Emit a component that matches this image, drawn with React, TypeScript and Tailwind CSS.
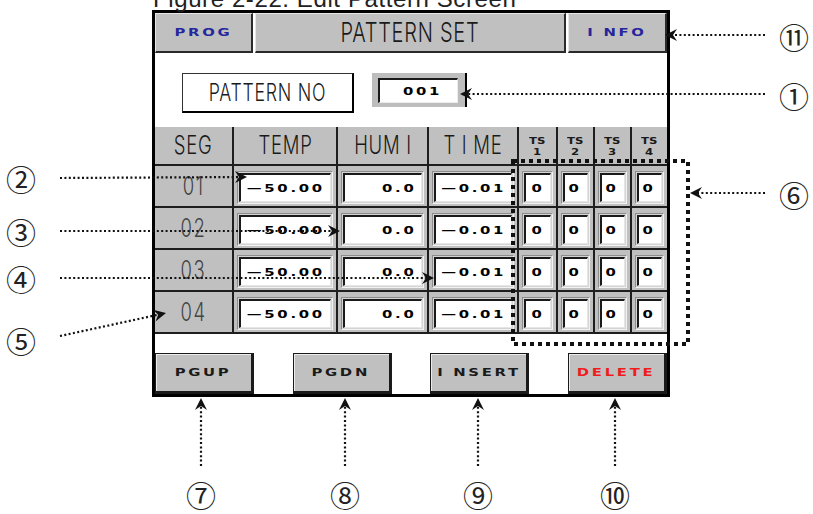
import React from "react";

const LABEL = "font-['Inter','Liberation_Sans',sans-serif] font-light";
const PIX = "inline-block font-['DejaVu_Sans',sans-serif] font-bold text-[11px] tracking-[2px] scale-x-[1.35] leading-none";
const CIRCLE = "absolute font-['Noto_Sans_CJK_KR','Noto_Sans_CJK_SC',sans-serif] text-[30px] leading-none text-[#222]";

const COLS = ["SEG", "TEMP", "HUM I", "T I ME"];
const ROWS = ["01", "02", "03", "04"];

function Label({ children, className = "" }: { children: React.ReactNode; className?: string }) {
  return <span className={`inline-block scale-x-[0.74] ${LABEL} ${className}`}>{children}</span>;
}

function Field({ value }: { value: string }) {
  return (
    <div className="flex bg-[#c0c0c0] px-[3px] pt-[5px] pb-[2px]">
      <div className="flex flex-1 border border-t-[#8c8c8c] border-l-[#8c8c8c] border-b-[#f2f2f2] border-r-[#f2f2f2] bg-[#d4d4d4] p-px">
        <div className="flex flex-1 items-center justify-end border-t-2 border-l-2 border-b border-r border-t-[#1a1a1a] border-l-[#1a1a1a] border-b-[#e6e6e6] border-r-[#e6e6e6] bg-white pr-[5px]">
          <span className={`${PIX} origin-right text-black`}>{value}</span>
        </div>
      </div>
    </div>
  );
}

function Arrow({ x1, y1, x2, y2 }: { x1: number; y1: number; x2: number; y2: number }) {
  const dx = x2 - x1;
  const dy = y2 - y1;
  const len = Math.hypot(dx, dy);
  const ux = dx / len;
  const uy = dy / len;
  const px = -uy;
  const py = ux;
  const L = 12;
  const W = 6;
  const N = 8;
  const bx = x2 - ux * L;
  const by = y2 - uy * L;
  const nx = x2 - ux * N;
  const ny = y2 - uy * N;
  const pts = `${x2},${y2} ${bx + px * W},${by + py * W} ${nx},${ny} ${bx - px * W},${by - py * W}`;
  return (
    <g>
      <line x1={x1} y1={y1} x2={nx} y2={ny} stroke="#111" strokeWidth={2.2} strokeDasharray="2 2.4" />
      <polygon points={pts} fill="#111" />
    </g>
  );
}

function HeadButton({ children, w, blue }: { children: React.ReactNode; w: string; blue?: boolean }) {
  return (
    <div
      className={`${w} flex items-center justify-center border-t border-l border-t-[#e6e6e6] border-l-[#e6e6e6] border-b-2 border-r-2 border-b-[#2a2a2a] border-r-[#2a2a2a] bg-[#c0c0c0] ${
        blue ? "text-[#26269c]" : "text-[#1a1a1a]"
      }`}
    >
      {children}
    </div>
  );
}

function FootButton({ children, red }: { children: React.ReactNode; red?: boolean }) {
  return (
    <div className="flex w-[99px] items-center justify-center border border-[#1a1a1a] border-b-[3px] border-r-[3px] bg-[#c0c0c0] shadow-[inset_1px_1px_0_#ececec]">
      <span className={`${PIX} ${red ? "text-[#f01c1c]" : "text-[#1a1a1a]"}`}>{children}</span>
    </div>
  );
}

export default function App() {
  return (
    <div className="relative h-[514px] w-[813px] overflow-hidden bg-white pt-[10px]">
      {/* caption, cut off by the top edge */}
      <div className="absolute left-[153px] top-[-13px] font-['Liberation_Sans',sans-serif] text-[24px] leading-none tracking-[0.6px] text-[#222]">
        Figure 2-22. Edit Pattern Screen
      </div>

      {/* the touch screen */}
      <div className="ml-[152px] flex h-[387px] w-[518px] flex-col border-[3px] border-black bg-white">
        <div className="flex h-[40px] gap-[2px]">
          <HeadButton w="w-[98px]" blue>
            <span className={PIX}>PROG</span>
          </HeadButton>
          <HeadButton w="w-[311px]">
            <Label className="text-[27px] leading-none tracking-[1px] text-[#1a1a1a]">PATTERN SET</Label>
          </HeadButton>
          <HeadButton w="w-[99px]" blue>
            <span className={PIX}>I NFO</span>
          </HeadButton>
        </div>

        <div className="mt-[20px] flex h-[40px] items-start">
          <div className="ml-[27px] flex h-[40px] w-[172px] items-center justify-center border border-[#333] border-b-2 border-r-2 border-b-black border-r-black">
            <Label className="text-[24px] leading-none tracking-[1px] text-[#1a1a1a]">PATTERN NO</Label>
          </div>
          <div className="ml-[18px] flex h-[34px] w-[95px] border-r-2 border-r-black bg-[#bdbdbd] pl-[6px] pr-[7px] pt-[5px] pb-[4px]">
            <div className="flex flex-1 items-center justify-center border-t-2 border-l-2 border-t-[#1a1a1a] border-l-[#1a1a1a] border-b border-r border-b-[#ececec] border-r-[#ececec] bg-white pl-[8px]">
              <span className={`${PIX} text-[10px] text-black`}>001</span>
            </div>
          </div>
        </div>

        <div className="mt-[14px] grid grid-cols-[77px_102px_89px_88px_37px_35px_35px_35px] grid-rows-[37px_40px_40px_40px_40px] gap-[2px] bg-[#1e1e1e] pb-[2px]">
          {COLS.map((c) => (
            <div key={c} className="flex items-center justify-center bg-[#c0c0c0]">
              <Label className="text-[25px] leading-none tracking-[1px] text-[#1a1a1a]">{c}</Label>
            </div>
          ))}
          {[1, 2, 3, 4].map((n) => (
            <div key={n} className="flex flex-col items-center justify-center gap-[2px] bg-[#c0c0c0] pt-[2px] text-[#1a1a1a]">
              <span className="inline-block scale-x-[1.3] font-['DejaVu_Sans',sans-serif] text-[9px] font-bold leading-none">TS</span>
              <span className="inline-block scale-x-[1.3] font-['DejaVu_Sans',sans-serif] text-[9px] font-bold leading-none">{n}</span>
            </div>
          ))}
          {ROWS.map((r) => (
            <React.Fragment key={r}>
              <div className="flex items-center justify-center bg-[#c0c0c0]">
                <Label className="text-[25px] leading-none tracking-[2px] text-[#444]">{r}</Label>
              </div>
              <Field value="—50.00" />
              <Field value="0.0" />
              <Field value="—0.01" />
              <Field value="0" />
              <Field value="0" />
              <Field value="0" />
              <Field value="0" />
            </React.Fragment>
          ))}
        </div>

        <div className="mt-[19px] flex h-[41px] justify-between">
          <FootButton>PGUP</FootButton>
          <FootButton>PGDN</FootButton>
          <FootButton>I NSERT</FootButton>
          <FootButton red>DELETE</FootButton>
        </div>
      </div>

      {/* callout lines */}
      <svg className="pointer-events-none absolute left-0 top-0" width={813} height={514}>
        <rect x={513} y={161} width={175} height={183} fill="none" stroke="#111" strokeWidth={4} strokeDasharray="4 4" />
        <Arrow x1={765} y1={35} x2={665} y2={35} />
        <Arrow x1={765} y1={94} x2={460} y2={94} />
        <Arrow x1={765} y1={193} x2={690} y2={193} />
        <Arrow x1={60} y1={178} x2={247} y2={177} />
        <Arrow x1={60} y1={231} x2={340} y2={231} />
        <Arrow x1={60} y1={278} x2={434} y2={278} />
        <Arrow x1={60} y1={336} x2={166} y2={313} />
        <Arrow x1={201} y1={466} x2={201} y2={398} />
        <Arrow x1={345} y1={466} x2={345} y2={398} />
        <Arrow x1={478} y1={466} x2={478} y2={398} />
        <Arrow x1={615} y1={466} x2={615} y2={398} />
      </svg>

      <span className={`${CIRCLE} left-[779px] top-[21px]`}>⑪</span>
      <span className={`${CIRCLE} left-[779px] top-[80px]`}>①</span>
      <span className={`${CIRCLE} left-[779px] top-[179px]`}>⑥</span>
      <span className={`${CIRCLE} left-[6px] top-[163px]`}>②</span>
      <span className={`${CIRCLE} left-[6px] top-[216px]`}>③</span>
      <span className={`${CIRCLE} left-[6px] top-[263px]`}>④</span>
      <span className={`${CIRCLE} left-[6px] top-[325px]`}>⑤</span>
      <span className={`${CIRCLE} left-[186px] top-[479px]`}>⑦</span>
      <span className={`${CIRCLE} left-[330px] top-[479px]`}>⑧</span>
      <span className={`${CIRCLE} left-[463px] top-[479px]`}>⑨</span>
      <span className={`${CIRCLE} left-[600px] top-[479px]`}>⑩</span>
    </div>
  );
}
